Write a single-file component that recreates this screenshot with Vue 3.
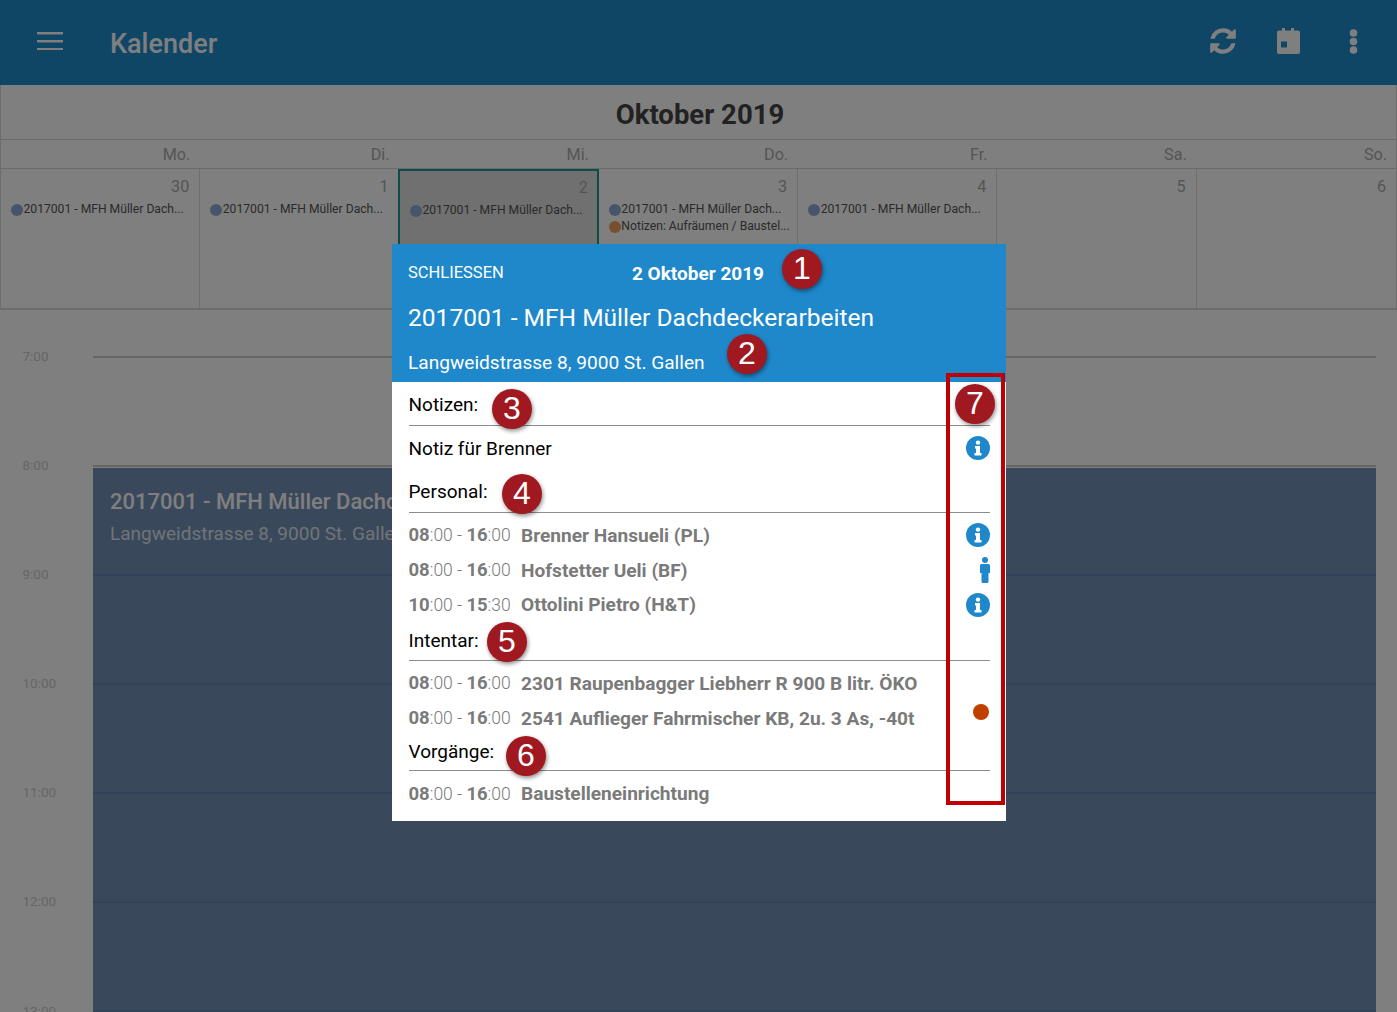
<script setup>
const weekdays = ['Mo.', 'Di.', 'Mi.', 'Do.', 'Fr.', 'Sa.', 'So.']
const ev = '2017001 - MFH Müller Dach...'
const days = [
  { n: 30, items: [{ t: ev, c: 'blue' }] },
  { n: 1, items: [{ t: ev, c: 'blue' }] },
  { n: 2, sel: true, items: [{ t: ev, c: 'blue' }] },
  { n: 3, items: [{ t: ev, c: 'blue' }, { t: 'Notizen: Aufräumen / Baustel...', c: 'orange' }] },
  { n: 4, items: [{ t: ev, c: 'blue' }] },
  { n: 5, items: [] },
  { n: 6, items: [] },
]
const hours = ['7:00', '8:00', '9:00', '10:00', '11:00', '12:00', '13:00']
const personal = [
  { a: '08', b: ':00', c: '16', d: ':00', t: 'Brenner Hansueli (PL)', icon: 'info' },
  { a: '08', b: ':00', c: '16', d: ':00', t: 'Hofstetter Ueli (BF)', icon: 'person' },
  { a: '10', b: ':00', c: '15', d: ':30', t: 'Ottolini Pietro (H&T)', icon: 'info' },
]
const inventar = [
  { a: '08', b: ':00', c: '16', d: ':00', t: '2301 Raupenbagger Liebherr R 900 B litr. ÖKO' },
  { a: '08', b: ':00', c: '16', d: ':00', t: '2541 Auflieger Fahrmischer KB, 2u. 3 As, -40t', icon: 'dot' },
]
const vorgaenge = [{ a: '08', b: ':00', c: '16', d: ':00', t: 'Baustelleneinrichtung' }]
const sections = [
  { label: 'Intentar:', cls: 'head-c', rows: inventar, body: 'body-c' },
  { label: 'Vorgänge:', cls: 'head-d', rows: vorgaenge, body: 'body-d' },
]
const badges = [
  { n: 1, cls: 'b1' }, { n: 2, cls: 'b2' }, { n: 3, cls: 'b3' }, { n: 4, cls: 'b4' },
  { n: 5, cls: 'b5' }, { n: 6, cls: 'b6' }, { n: 7, cls: 'b7' },
]
</script>

<template>
  <div class="app">
    <header class="bar">
      <svg class="menu" viewBox="0 0 26 18" width="26" height="18"><path d="M0 0h26v2.400H0zM0 8h26v2.400H0zM0 16h26v2.400H0z" fill="#fff"/></svg>
      <div class="bar-title">Kalender</div>
      <div class="bar-icons">
        <span class="bi"><svg width="30" height="30" viewBox="0 0 1792 1792"><path fill="#fff" d="M1639 1056q0 5-1 7-64 268-268 434.5t-478 166.5q-146 0-282.5-55t-243.5-157l-129 129q-19 19-45 19t-45-19-19-45v-448q0-26 19-45t45-19h448q26 0 45 19t19 45-19 45l-137 137q71 66 161 102t187 36q134 0 250-65t186-179q11-17 53-117 8-23 30-23h192q13 0 22.5 9.5t9.5 22.5zm25-800v448q0 26-19 45t-45 19h-448q-26 0-45-19t-19-45 19-45l138-138q-148-137-349-137-134 0-250 65t-186 179q-11 17-53 117-8 23-30 23h-199q-13 0-22.5-9.5t-9.5-22.5v-7q65-268 270-434.5t480-166.5q146 0 284 55.5t245 156.5l130-129q19-19 45-19t45 19 19 45z"/></svg></span>
        <span class="bi"><svg width="23" height="26" viewBox="0 0 23 26"><path fill="#fff" fill-rule="evenodd" d="M5 0h3v2.500h6V0h3v2.500h4a2 2 0 0 1 2 2V24a2 2 0 0 1-2 2H2a2 2 0 0 1-2-2V4.500a2 2 0 0 1 2-2h3zM4 13.500v6h6v-6z"/></svg></span>
        <span class="bi"><svg width="9" height="25" viewBox="0 0 9 25"><circle cx="4.500" cy="4" r="3.800" fill="#fff"/><circle cx="4.500" cy="12.500" r="3.800" fill="#fff"/><circle cx="4.500" cy="21" r="3.800" fill="#fff"/></svg></span>
      </div>
    </header>

    <section class="cal">
      <div class="month">Oktober 2019</div>
      <div class="grid week">
        <div v-for="w in weekdays" :key="w" class="wd">{{ w }}</div>
      </div>
      <div class="grid cells">
        <div v-for="d in days" :key="d.n" class="cell" :class="{ sel: d.sel }">
          <div class="num">{{ d.n }}</div>
          <div v-for="it in d.items" :key="it.t" class="item">
            <span class="pip" :class="it.c"></span><span>{{ it.t }}</span>
          </div>
        </div>
      </div>
    </section>

    <section class="day">
      <div v-for="h in hours" :key="h" class="hour">
        <div class="hlabel">{{ h }}</div>
        <div class="hline"></div>
      </div>
      <div class="event">
        <div class="ev-title">2017001 - MFH Müller Dachdeckerarbeiten</div>
        <div class="ev-addr">Langweidstrasse 8, 9000 St. Gallen</div>
        <div class="ev-lines">
          <div v-for="i in 5" :key="i" class="ev-line"></div>
        </div>
      </div>
    </section>

    <div class="dim"></div>

    <div class="modal">
      <div class="m-head">
        <div class="m-top">
          <span class="close">SCHLIESSEN</span>
          <span class="m-date">2 Oktober 2019</span>
        </div>
        <div class="m-title">2017001 - MFH Müller Dachdeckerarbeiten</div>
        <div class="m-addr">Langweidstrasse 8, 9000 St. Gallen</div>
      </div>
      <div class="m-body">
        <div class="head head-a">Notizen:</div>
        <div class="note">
          <span>Notiz für Brenner</span>
          <svg class="info" viewBox="0 0 24 24" width="24" height="24"><circle cx="12" cy="12" r="12" fill="#1e88cb"/><circle cx="12" cy="6.600" r="2.200" fill="#fff"/><path d="M9 10h5v7h1.500v2.500h-7V17H10v-4.500H9z" fill="#fff"/></svg>
        </div>

        <div class="head head-b">Personal:</div>
        <div class="rows body-b">
          <div v-for="r in personal" :key="r.t" class="row">
            <span class="time"><b>{{ r.a }}</b><i>{{ r.b }}</i><i> - </i><b>{{ r.c }}</b><i>{{ r.d }}</i></span>
            <span class="what">{{ r.t }}</span>
            <svg v-if="r.icon === 'info'" class="info" viewBox="0 0 24 24" width="24" height="24"><circle cx="12" cy="12" r="12" fill="#1e88cb"/><circle cx="12" cy="6.600" r="2.200" fill="#fff"/><path d="M9 10h5v7h1.500v2.500h-7V17H10v-4.500H9z" fill="#fff"/></svg>
            <svg v-if="r.icon === 'person'" class="person" viewBox="0 0 10 26" width="10" height="26"><circle cx="5" cy="3" r="3" fill="#1e88cb"/><path d="M1.500 7h7A1.500 1.500 0 0 1 10 8.500V16H8.500v8.500A1.500 1.500 0 0 1 7 26H3a1.500 1.500 0 0 1-1.500-1.500V16H0V8.500A1.500 1.500 0 0 1 1.500 7z" fill="#1e88cb"/></svg>
          </div>
        </div>

        <template v-for="s in sections" :key="s.label">
          <div class="head" :class="s.cls">{{ s.label }}</div>
          <div class="rows" :class="s.body">
            <div v-for="r in s.rows" :key="r.t" class="row">
              <span class="time"><b>{{ r.a }}</b><i>{{ r.b }}</i><i> - </i><b>{{ r.c }}</b><i>{{ r.d }}</i></span>
              <span class="what">{{ r.t }}</span>
              <span v-if="r.icon === 'dot'" class="odot"></span>
            </div>
          </div>
        </template>
      </div>
    </div>

    <div class="frame"></div>
    <div v-for="b in badges" :key="b.n" class="badge" :class="b.cls">{{ b.n }}</div>
  </div>
</template>

<style scoped>
.app {
  position: relative;
  width: 1397px;
  height: 1012px;
  overflow: hidden;
  background: #fff;
  font-family: Roboto, "Liberation Sans", sans-serif;
}
.bar {
  height: 85px;
  background: #1e8ccd;
  display: flex;
  align-items: center;
  padding: 0 10.500px 0 37px;
  box-sizing: border-box;
  color: #fff;
}
.menu { margin-top: -3px; }
.bar-title {
  margin-left: 47px;
  font-size: 27px;
  font-weight: 500;
  padding-top: 2px;
}
.bar-icons {
  margin-left: auto;
  display: flex;
  align-items: center;
  margin-top: -3px;
}
.bi {
  width: 65.500px;
  display: flex;
  justify-content: center;
}
.cal { border-left: 1px solid #d8d8d8; border-right: 1px solid #d8d8d8; }
.month {
  height: 55px;
  line-height: 60px;
  text-align: center;
  font-size: 27.500px;
  font-weight: 700;
  color: #444;
  padding-left: 3px;
  border-bottom: 1px solid #d4d4d4;
  box-sizing: border-box;
}
.grid { display: grid; grid-template-columns: repeat(7, 1fr); }
.week { height: 29px; border-bottom: 1px solid #d4d4d4; box-sizing: border-box; }
.wd {
  text-align: right;
  padding-right: 10px;
  font-size: 16.200px;
  line-height: 30px;
  color: #aaa;
}
.wd:last-child { padding-right: 9px; }
.cells { height: 141px; border-bottom: 2px solid #d8d8d8; box-sizing: border-box; }
.cell {
  border-right: 1px solid #dcdcdc;
  padding: 8px 10px 0 10px;
  box-sizing: border-box;
  overflow: hidden;
}
.cell:last-child { border-right: 0; }
.cell.sel {
  background: #e0e0e0;
  border: 2px solid #1a9a8e;
  border-bottom: 0;
  margin-left: -1.600px;
  padding: 7px 9px 0 10px;
  height: 100px;
}
.num {
  text-align: right;
  font-size: 16.200px;
  line-height: 20px;
  color: #aaa;
  margin-bottom: 4px;
}
.item {
  display: flex;
  align-items: center;
  font-size: 12.150px;
  line-height: 17px;
  color: #555;
  white-space: nowrap;
}
.pip {
  flex: none;
  width: 12px;
  height: 12px;
  border-radius: 50%;
  margin-right: 0.500px;
}
.pip.blue { background: #8ca8d8; }
.pip.orange { background: #f0a060; }
.day { position: relative; padding-top: 37px; background: #fff; }
.hour {
  height: 109.100px;
  display: flex;
  align-items: flex-start;
  padding-right: 21px;
}
.hlabel {
  width: 93px;
  flex: none;
  padding-left: 22.500px;
  box-sizing: border-box;
  font-size: 13.500px;
  line-height: 18px;
  margin-top: 0;
  color: #ccc;
}
.hline { flex: 1; height: 2px; margin-top: 9px; background: #ccc; }
.event {
  position: absolute;
  left: 93px;
  right: 21px;
  top: 158px;
  height: 600px;
  background: #7490b6;
  color: #fff;
  padding: 21px 0 0 17px;
  box-sizing: border-box;
}
.ev-title { font-size: 22px; font-weight: 500; line-height: 26px; }
.ev-addr { font-size: 19px; line-height: 24px; margin-top: 7px; color: rgba(255,255,255,.8); }
.ev-lines { position: absolute; left: 0; right: 0; top: 106px; }
.ev-line { height: 2px; background: #6484b0; margin-bottom: 107.100px; }
.dim {
  position: absolute;
  inset: 0;
  background: rgba(0, 0, 0, 0.5);
}
.modal {
  position: absolute;
  left: 392px;
  top: 244px;
  width: 614px;
  height: 577px;
  background: #fff;
}
.m-head {
  height: 138px;
  background: #1e88cb;
  color: #fff;
  padding: 0 16px;
  box-sizing: border-box;
}
.m-top {
  position: relative;
  height: 58px;
  display: flex;
  align-items: center;
}
.close { font-size: 16.500px; margin-top: -2px; }
.m-date {
  position: absolute;
  left: 0;
  right: 2px;
  text-align: center;
  font-size: 19px;
  font-weight: 700;
}
.m-title { font-size: 24.550px; line-height: 30px; margin-top: 1px; }
.m-addr { font-size: 19.100px; line-height: 24px; margin-top: 18px; }
.m-body { padding: 0 16px 0 16.500px; color: #000; }
.head {
  font-size: 19px;
  line-height: 21px;
  padding-bottom: 10px;
  border-bottom: 1px solid #8c8c8c;
}
.head-a { padding-top: 12px; padding-bottom: 10px; }
.head-b { padding-top: 11px; }
.head-c { padding-top: 8px; padding-bottom: 9px; }
.head-d { padding-top: 6px; padding-bottom: 8px; }
.note {
  height: 44px;
  display: flex;
  align-items: center;
  justify-content: space-between;
  font-size: 19px;
}
.note .info { margin-right: 0.500px; }
.rows { padding-top: 5px; }
.row {
  height: 34.700px;
  display: flex;
  align-items: center;
  font-size: 18px;
  color: #7a7a7a;
  white-space: nowrap;
}
.time { width: 112.500px; flex: none; }
.time b { font-size: 18.500px; font-weight: 700; }
.time i { font-style: normal; font-weight: 300; font-size: 17.500px; }
.what { font-weight: 700; font-size: 19.100px; }
.row .info { margin-left: auto; margin-right: 0.500px; }
.info { flex: none; }
.person { margin-left: auto; flex: none; margin-right: 0.500px; }
.odot {
  margin-left: auto;
  margin-right: 1px;
  align-self: flex-start;
  margin-top: 3px;
  width: 16px;
  height: 16px;
  border-radius: 50%;
  background: #c04000;
}
.frame {
  position: absolute;
  left: 946px;
  top: 373px;
  width: 59px;
  height: 432px;
  border: 4px solid #c00000;
  box-sizing: border-box;
}
.badge {
  position: absolute;
  width: 40px;
  height: 40px;
  border-radius: 50%;
  background: #a01820;
  color: #fff;
  font-family: "Liberation Sans", sans-serif;
  font-size: 32px;
  line-height: 39px;
  text-align: center;
  box-shadow: 1px 2px 4px rgba(0, 0, 0, .45);
}
.b1 { left: 782px; top: 249px; }
.b2 { left: 727px; top: 334px; }
.b3 { left: 492px; top: 389px; }
.b4 { left: 502px; top: 474px; }
.b5 { left: 487px; top: 622px; }
.b6 { left: 506px; top: 736px; }
.b7 { left: 955px; top: 384px; }
</style>
